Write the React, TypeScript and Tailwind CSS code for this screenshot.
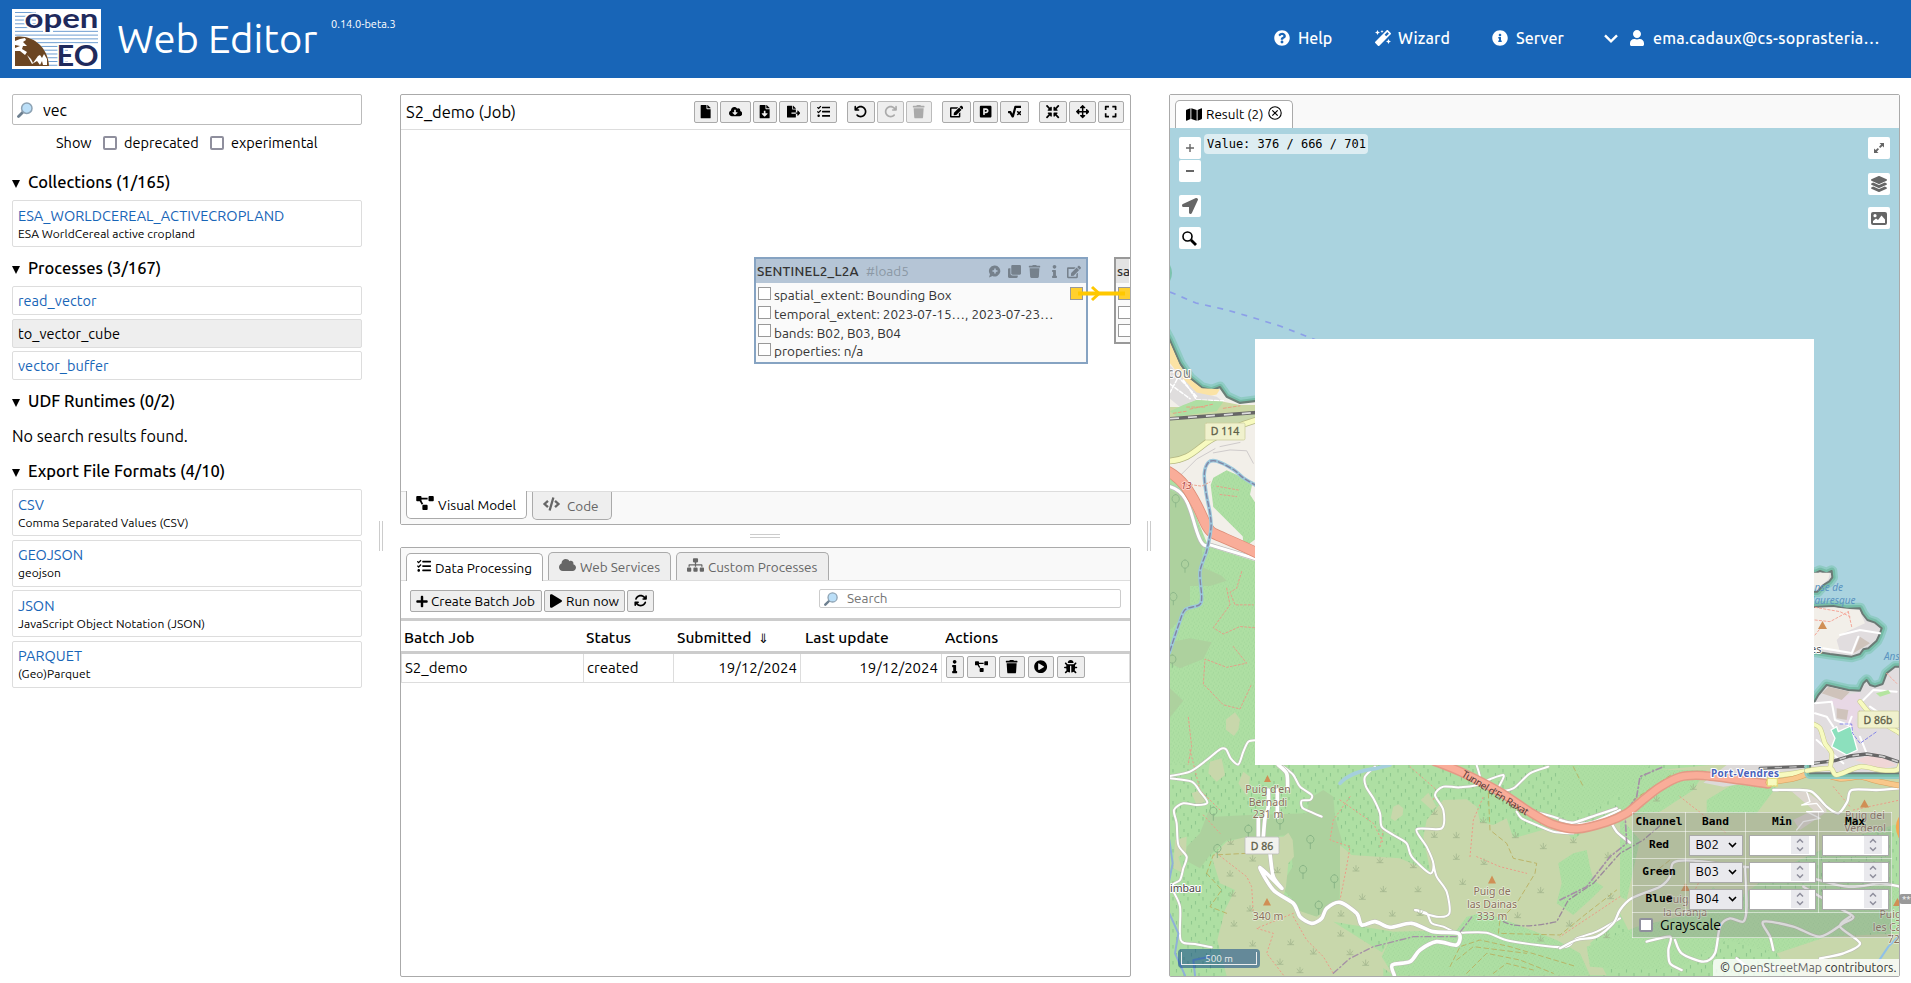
import React from "react";
import {
  FaFile, FaCloudDownloadAlt, FaFileDownload, FaFileExport, FaTasks, FaTrash, FaEdit, FaParking, FaSquareRootAlt,
  FaArrowsAlt, FaExpand, FaProjectDiagram, FaCode, FaCloud, FaSitemap, FaPlus, FaPlay, FaInfo, FaPlayCircle, FaBug,
  FaMap, FaQuestionCircle, FaMagic, FaInfoCircle, FaUser, FaLayerGroup, FaLocationArrow, FaClone,
  FaCompressArrowsAlt,
} from "react-icons/fa";
import { FaArrowRotateLeft, FaArrowRotateRight, FaArrowsRotate } from "react-icons/fa6";

type Icon = React.ComponentType<{ className?: string }>;

function Logo() {
  const lines = Array.from({ length: 15 }, (_, i) => 3.5 + i * 3.77);
  return (
    <svg className="h-[60px] w-[89px] shrink-0" viewBox="0 0 89 60">
      <rect width="89" height="60" fill="#fff" />
      {lines.map((y) => (
        <path key={y} d={`M3 ${y}H86`} stroke="#5f93cc" strokeWidth="0.9" />
      ))}
      <path d="M24 2H86V19.500H41V25H31V19.500H24ZM56 36H86V57H56ZM3 28C20 25 36 38 37 57H3Z" fill="#fff" />
      <path d="M3 28C20 25 36 38 37 57H3Z" fill="#6b4522" />
      <path d="M3 32L8 30L13 29L14 31L11 33L15 37L11 37L10 40L15 43L13 46L8 42L3 42V39L8 37L3 36ZM15 46L19 50L21 54L26 47L28 46L30 49L32 45L35 50V56H31L30 52L28 56L25 52L20 55Z" fill="#fff" />
      <g fontFamily="Lato, sans-serif" fontWeight="700" fill="#1f2a5c" stroke="#fff" strokeWidth="3" paintOrder="stroke">
        <text x="12.500" y="19" textLength="74" lengthAdjust="spacingAndGlyphs" fontSize="27.500">open</text>
        <text x="44.500" y="56.500" textLength="42" lengthAdjust="spacingAndGlyphs" fontSize="28">EO</text>
      </g>
    </svg>
  );
}

function Lens({ className }: { className?: string }) {
  return (
    <svg className={className} viewBox="0 0 16 16">
      <path d="M1.500 14.500L6 10" stroke="#6d7f8f" strokeWidth="2.800" strokeLinecap="round" />
      <circle cx="9.800" cy="6.200" r="5.200" fill="#bbdff8" stroke="#8da2b3" strokeWidth="1.500" />
    </svg>
  );
}

function Heading({ children, className }: { children: React.ReactNode; className: string }) {
  return (
    <div className={`flex h-6 items-center text-[16.500px] font-medium ${className}`}>
      <svg className="mt-1 h-2 w-2" viewBox="0 0 8 8"><path d="M0 0H8L4 8Z" /></svg>
      <span className="ml-2">{children}</span>
    </div>
  );
}

function Card({ title, sub, active }: { title: string; sub?: string; active?: boolean }) {
  return (
    <div className={`flex flex-col justify-center rounded-[2px] border border-[#ddd] px-[5px] ${sub ? "h-[47px] pt-px" : "h-[29px]"} ${active ? "bg-[#eee] text-black" : "text-[#1865b7]"}`}>
      <div className="h-[19px] text-[14.500px] leading-[20px] tracking-[0.05px]">{title}</div>
      {sub && <div className="h-[18px] text-[12px] leading-[18px] tracking-[0.06px] text-black">{sub}</div>}
    </div>
  );
}

function Btn({ icon: I, w, off }: { icon: Icon; w: string; off?: boolean }) {
  return (
    <button className={`flex h-[22px] items-center justify-center rounded-[2px] border bg-[#eee] ${w} ${off ? "border-[#bbb] text-[#aaa]" : "border-[#aaa] text-black"}`}>
      <I className="h-[13.300px] w-auto" />
    </button>
  );
}

function VHandle() {
  return <div className="mt-[427px] h-[30px] w-1 border-x border-[#ccc]" />;
}

function NodeRow({ children }: { children: React.ReactNode }) {
  return (
    <div className="flex h-[18.700px] items-center">
      <span className="h-[13px] w-[13px] shrink-0 border border-[#999] bg-white" />
      <span className="ml-[3px] mt-[4px] text-[13.500px] whitespace-nowrap">{children}</span>
    </div>
  );
}

function Canvas() {
  return (
    <div className="relative h-[361px] overflow-hidden">
      <div className="absolute left-[353px] top-[127px] h-[107px] w-[334px] border-2 border-[#86a3c2] bg-[#fafafa] text-[#333]">
        <div className="flex h-6 items-center bg-[#b5c5d6] pt-px text-[13.500px]">
          <span className="w-[110px] tracking-[0.2px] pl-px font-medium whitespace-nowrap">SENTINEL2_L2A</span>
          <span className="w-[118px] text-[#8b98a5]">#load5</span>
          <span className="flex items-center text-[#76818c] [&>*]:flex [&>*]:w-5 [&>*]:justify-center">
            <span>
              <svg className="h-[13px] w-[13px]" viewBox="0 0 13 13">
                <path d="M7 .5a5.500 5.500 0 1 1-2.500 10.500L1 12.500l1-3.300A5.500 5.500 0 0 1 7 .5Z" fill="currentColor" />
                <path d="M7 3.500v5M4.500 6h5" stroke="#b5c5d6" strokeWidth="1.500" />
              </svg>
            </span>
            <span><FaClone className="h-[13px] w-auto" /></span>
            <span><FaTrash className="h-[13px] w-auto" /></span>
            <span><FaInfo className="h-[13px] w-auto" /></span>
            <span><FaEdit className="h-[14px] w-auto" /></span>
          </span>
        </div>
        <div className="pl-[2px] pt-[1px]">
          <NodeRow>spatial_extent: Bounding Box</NodeRow>
          <NodeRow>temporal_extent: 2023-07-15…, 2023-07-23…</NodeRow>
          <NodeRow>bands: B02, B03, B04</NodeRow>
          <NodeRow>properties: n/a</NodeRow>
        </div>
      </div>
      <div className="absolute left-[713px] top-[127px] h-[87px] w-[60px] border-2 border-[#999] bg-[#fafafa] text-[#333]">
        <div className="h-6 w-[13px] overflow-hidden bg-[#e3e3e3] pl-px text-[13.500px] font-medium leading-[25px]">sa</div>
        <div className="pl-[2px] pt-[1px]">
          <NodeRow>{null}</NodeRow>
          <NodeRow>{null}</NodeRow>
          <NodeRow>{null}</NodeRow>
        </div>
      </div>
      <svg className="absolute left-[665px] top-[150px] h-[30px] w-[70px]" viewBox="1066 280 70 30">
        <rect x="1070.500" y="287.500" width="12" height="12" fill="#ffd02e" stroke="#999" />
        <rect x="1118.500" y="287.500" width="12" height="12" fill="#ffd02e" stroke="#999" />
        <path d="M1078 293.500H1125" stroke="#ffc800" strokeWidth="4" />
        <path d="M1092 287L1099 293.500L1092 300" stroke="#ffc800" strokeWidth="3" fill="none" />
      </svg>
    </div>
  );
}

function Tab({ icon: I, label, w, active, bottom, iconClass }: { icon: Icon; label: string; w: string; active?: boolean; bottom?: boolean; iconClass: string }) {
  return (
    <div className={`flex h-7 items-center border-[#aaa] text-[13.500px] whitespace-nowrap ${w} ${bottom ? "rounded-b-[5px] border-x border-b" : "rounded-t-[5px] border-x border-t"} ${active ? "bg-white text-black" : "bg-[#eee] text-[#666]"}`}>
      <I className={`-mt-1 h-[14px] shrink-0 ${iconClass}`} />
      <span className="mt-px">{label}</span>
    </div>
  );
}

const COLS = "grid grid-cols-[182px_90px_127px_141px_1fr]";

/* Turns "x,y x,y | x,y x,y" into smooth curves through the given points. */
function curve(spec: string) {
  return spec
    .split("|")
    .map((part) => {
      const p = part.trim().split(/\s+/).map((s) => s.split(",").map(Number));
      let d = `M${p[0][0]} ${p[0][1]}`;
      for (let i = 0; i < p.length - 1; i++) {
        const a = p[i - 1] ?? p[i], b = p[i], c = p[i + 1], e = p[i + 2] ?? c;
        d += `C${b[0] + (c[0] - a[0]) / 7} ${b[1] + (c[1] - a[1]) / 7} ${c[0] - (e[0] - b[0]) / 7} ${c[1] - (e[1] - b[1]) / 7} ${c[0]} ${c[1]}`;
      }
      return d;
    })
    .join("");
}

function Road({ pts, w, edge, fill }: { pts: string; w: number; edge: string; fill: string }) {
  const d = curve(pts);
  return (
    <>
      <path d={d} stroke={edge} strokeWidth={w + 3} />
      <path d={d} stroke={fill} strokeWidth={w} />
    </>
  );
}

const LANES =
  "30,108 90,95 140,60 180,28 198,28 212,55 235,73 250,35 265,5 290,0 | 30,115 95,125 120,155 142,188 110,195 70,190 42,210 50,250 55,315 80,350 70,385 60,420 35,440 60,500 62,600 105,612 155,622 | " +
  "370,80 400,105 420,140 455,165 450,180 425,182 427,203 450,215 485,230 | 645,80 615,110 618,140 640,175 660,220 665,260 700,285 740,310 755,350 810,400 820,370 800,320 770,268 845,265 850,210 825,165 850,140 900,142 960,130 950,75 | " +
  "820,370 830,410 860,455 868,520 830,530 765,510 800,520 815,550 850,560 890,580 | 905,578 980,578 1050,603 1210,622 1250,595 1310,575 1380,535 | 960,130 1030,105 1015,150 1060,145 1110,100 1165,80 | 1070,215 1085,235 1130,255 1180,275 1240,280 | 1120,215 1180,230 1240,250 1300,245 1380,210";
const HILL_ROAD =
  "355,75 380,100 383,145 | 325,150 325,200 315,235 310,290 | 352,150 352,232 | 295,235 295,300 | 330,340 340,410 365,445 300,382 340,450 400,490 420,530 455,550 485,535 500,505 540,487 590,520 605,555 645,545 690,562 755,550 820,575 895,580 890,615 830,605 780,630 750,665 697,675 703,706";
const EAST_LANES =
  "0,240 40,248 110,225 170,205 | 150,240 170,275 210,308 | 640,150 700,150 755,155 800,200 835,220 862,185 875,150 950,150 1020,145 | 0,625 50,600 110,590 160,550 180,510 215,475 300,440 330,410 340,368 400,362 550,380 700,400 860,440 960,430 1020,440 | " +
  "260,605 330,590 325,630 330,670 365,690 | 345,600 365,640 430,665 465,640 480,560 510,535 550,545 560,500 555,380 | 640,630 630,590 610,545 700,560 780,590 850,550 880,530 830,500 730,440 | 780,655 850,640 900,610 840,560 870,530 | 530,655 580,690 660,680";
const MOTORWAY =
  "1434,761 1461,772 1500,792 1530,812 1552,824 1577,829 1607,822 1627,813 1643,800 1660,787 1680,777 1703,775.5 1740,780 1768,784";
const STREAM = "290,374 250,355 220,335 170,315 145,318 133,345 138,390 150,440 153,475 140,530 120,580 125,640 118,660 75,672 55,710 28,775";
const WEST_LAND = "M0 -20L30 25L60 80L90 115L125 138L155 145L180 137L200 160L240 175L290 170V1100H0Z";
const HARBOUR =
  "M90 155L105 160L120 153L140 160L155 153L157 172L148 184L130 195L112 215H90ZM90 262L160 258L200 266L240 265L248 282L262 300L285 308L305 325L298 345L290 362L265 385L250 388L240 402L215 410L150 402L90 392ZM95 560L115 525L140 495L205 510L240 512L250 490L260 480L270 495L285 500L308 492L320 460L345 440H370V760H90Z";

function MapDrawing() {
  const tuft: [number, number][] = [
    [212, 305], [278, 355], [210, 400], [352, 390], [218, 460], [270, 505], [588, 385], [660, 360], [760, 375], [670, 447], [774, 447], [607, 470], [908, 425],
    [823, 215], [823, 284], [889, 285], [889, 350], [970, 240], [972, 365], [1066, 285], [1150, 318], [1240, 300], [1142, 450], [697, 520], [780, 518], [543, 520],
    [542, 580], [222, 550], [278, 610], [392, 606], [460, 634], [570, 636], [360, 665], [420, 690], [617, 668], [1228, 550], [1142, 595], [1344, 345], [1352, 468], [1340, 585], [1073, 525],
    [1600, 140], [1490, 175],
  ];
  const trees: [number, number][] = [[451, 298], [429, 388], [523, 416], [476, 495], [360, 240], [265, 267], [160, 213], [172, 325]];
  return (
    <svg className="absolute inset-0 h-full w-full" viewBox="1170 128 729 848" fill="none" strokeLinejoin="round" strokeLinecap="round" fontFamily="'Noto Sans', sans-serif">
      <defs>
        <pattern id="vine" width="15" height="16" patternUnits="userSpaceOnUse">
          <rect width="15" height="16" fill="#aedfa3" />
          <path d="M3 1v3.500M10.500 5v3.500M6.500 9v3.500M14 13v3" stroke="#8fc78e" strokeWidth="1.100" strokeLinecap="butt" />
        </pattern>
      </defs>
      <rect x="1170" y="128" width="729" height="848" fill="#aad3df" />

      {/* west coast */}
      <g transform="translate(1160 330) scale(0.33333 0.41646)">
        <path d={WEST_LAND} stroke="#8fcbc4" strokeWidth="11" vectorEffect="non-scaling-stroke" />
        <path d={WEST_LAND} stroke="#74bba6" strokeWidth="6" vectorEffect="non-scaling-stroke" />
        <path d={WEST_LAND} fill="#f2efe9" stroke="#6b8078" strokeWidth="2.200" vectorEffect="non-scaling-stroke" />
        <path d="M30 30L60 85L90 118L125 140L180 142L170 155L110 165L60 110L30 80Z" fill="#fbe3a5" />
        <path d="M30 85L110 150L170 160L190 172L120 172L60 185L30 165Z" fill="#dfdddd" />
        <path d="M40 100L110 160M30 130L90 165M60 105L30 150M70 120L110 168L190 170" stroke="#fff" strokeWidth="1.500" strokeDasharray="4 2" vectorEffect="non-scaling-stroke" />
        <path d="M30 185L60 185L110 168L190 172L240 180H290V205L30 215Z" fill="#cbd8a4" />
        <path d="M70 180L110 168L190 172L170 195L50 208L30 195Z" fill="#aedfa3" />
        <path d="M30 215L285 200V215L150 265L60 318L30 310Z" fill="#c8d7ab" />
        <path d="M80 185H140M40 200L80 195M90 190L160 178M190 188L240 182" stroke="#e9a083" strokeWidth="1" strokeDasharray="3 2" vectorEffect="non-scaling-stroke" />
        <path d="M30 345L75 390L110 450L145 520L285 555V1100H30Z" fill="url(#vine)" />
        <path d="M152 372L160 355L200 337L278 365L270 395L290 420V500L265 515L250 508L248 495L160 425Z" fill="url(#vine)" />
        <path d="M30 385L70 398L100 440L125 520L130 570L185 590L200 602L150 615L90 615V670L30 720Z" fill="#add19e" />
        <path d="M30 750L90 740L155 750L130 790L60 812L30 800ZM30 860L70 890L30 930Z" fill="#add19e" />
        <path d="M198 935L225 918L240 935L235 960L222 975L198 960Z" fill="#c8d7ab" />
        <path d="M30 213L290 198" stroke="#666" strokeWidth="3.500" vectorEffect="non-scaling-stroke" />
        <path d="M30 213L290 198" stroke="#ddd" strokeWidth="1.700" strokeDasharray="9 9" strokeLinecap="butt" vectorEffect="non-scaling-stroke" />
        <path d="M25 315C90 312 110 285 150 265S240 228 290 216" stroke="#b5b883" strokeWidth="6.500" vectorEffect="non-scaling-stroke" />
        <path d="M25 315C90 312 110 285 150 265S240 228 290 216" stroke="#f7fabf" strokeWidth="5" vectorEffect="non-scaling-stroke" />
        <path d="M25 375C80 385 90 430 105 470S130 525 150 516L290 550" stroke="#bbb" strokeWidth="4.500" vectorEffect="non-scaling-stroke" />
        <path d="M25 375C80 385 90 430 105 470S130 525 150 516L290 550" stroke="#fff" strokeWidth="3" vectorEffect="non-scaling-stroke" />
        <path d="M160 295L210 288L260 290L280 320M60 350L110 310L165 285M180 280L240 270" stroke="#cfcbcb" strokeWidth="1" vectorEffect="non-scaling-stroke" />
        <path d="M25 340C70 360 90 390 110 420S140 480 160 488S240 515 290 535" stroke="#dc8b75" strokeWidth="11" vectorEffect="non-scaling-stroke" />
        <path d="M25 340C70 360 90 390 110 420S140 480 160 488S240 515 290 535" stroke="#f9ad99" strokeWidth="9.500" vectorEffect="non-scaling-stroke" />
        <path d={curve(STREAM)} stroke="#9cc8dc" strokeWidth="3.500" vectorEffect="non-scaling-stroke" />
        <path d={curve(STREAM)} stroke="#8286a5" strokeWidth="1.400" strokeDasharray="5 3" vectorEffect="non-scaling-stroke" />
        <path d="M245 580L230 620L210 630L225 660L280 660M200 620L210 660L160 715L190 730L240 712L285 715M220 760L260 800L200 810L135 790L130 850L190 900L240 910L275 850M85 930L95 1000L80 1060M170 375L240 385M180 395L230 400M80 370L125 375L150 365" stroke="#e99a86" strokeWidth="0.900" strokeDasharray="2 2" vectorEffect="non-scaling-stroke" />
        <g stroke="#8fb98b" strokeWidth="1">
          {[[75, 562], [40, 640], [47, 405], [37, 790]].map(([x, y]) => (
            <path key={`${x}-${y}`} d={`M${x} ${y + 10}v10M${x} ${y - 10}a11 10 0 1 0 .1 0`} vectorEffect="non-scaling-stroke" />
          ))}
        </g>
      </g>

      {/* inland hills */}
      <rect x="1170" y="765" width="729" height="211" fill="url(#vine)" />
      <g transform="translate(1160 740) scale(0.33333)">
        <path d="M150 65L185 55L195 105L170 125L145 100ZM235 130L250 95L270 110L262 170ZM95 160L120 150L135 185L110 195ZM692 235L700 200L715 193L730 205L728 225L705 243ZM782 180L805 158L830 200L815 210Z" fill="#c8d7ab" />
        <path d="M145 215L165 230L270 225L440 220L450 175L490 150L520 170L525 230L545 300L538 490L470 530L420 515L400 480L360 440L398 380L390 285L200 300L150 345L120 385L75 360L80 320L120 280Z" fill="#add19e" />
        <path d="M155 350L200 305L260 290L370 290L385 278L398 300L402 350L385 370L378 440L370 470L410 510L470 530L540 485V315L575 345L720 355L800 390L812 400L790 290L800 240L850 180L920 178L950 200L960 245L1000 255L1040 235L1060 295L1200 255L1240 300L1300 250L1380 250V530L1290 610L1340 706H700L665 680V640L700 575L520 545L670 640V708H200L172 600L195 510L225 450L180 430Z" fill="#c8d7ab" />
        <path d="M700 575L890 570L920 530L960 520L1010 530L1190 600L1260 640L1290 706H700L665 650Z" fill="url(#vine)" />
        <path d="M1195 370L1240 340L1280 330L1290 380L1300 420L1330 440L1290 480L1240 525L1190 490L1205 430Z" fill="url(#vine)" />
        <path d="M45 300L80 290L78 340L55 350L70 400L40 385Z" fill="#c8d7ab" />
        <path d="M1380 180L1500 90L1650 75H2220V250L2050 300L1850 390L1700 500L1560 620L1420 600L1380 520Z" fill="#c8d7ab" />
        <path d="M1500 90L1380 150V230L1500 215L1600 150L1640 90ZM1640 180L1740 120L1850 140L1790 220H1640ZM1200 75H1470L1420 130L1320 200L1200 230Z" fill="url(#vine)" />
        <path d="M1280 620L1430 560L1600 520L1660 440L1700 500L1850 470L2220 430V560L2000 600L1850 640L1700 600L1560 680L1430 690L1290 680Z" fill="url(#vine)" />
        <path d="M1850 640L2000 590L2220 580V708H1900ZM1570 360L1800 350L1800 420L1600 450Z" fill="#c8d7ab" />
        <path d="M1380 230L1440 300L1400 480L1380 470Z" fill="url(#vine)" />

        <g stroke="#eb9c88" strokeWidth="3" strokeDasharray="4 8">
          <path d="M90 30L120 150L180 210M130 225L180 280M170 340L260 410L275 440L280 520M400 520L290 565L340 580L320 640L370 705M400 530L440 600L490 650L520 700M570 170L520 240L510 300L570 320L560 380L540 480M660 320L670 270M930 350L940 240L970 170M950 350L1020 380L1100 400M750 80L830 150L820 180M540 180L640 250L670 310M1380 470L1200 590" />
          <path d="M1560 170L1700 280M1620 420L1580 500M2080 210L2220 180M2020 140L2070 200" />
        </g>
        <g stroke="#b9ac5c" strokeWidth="2.500" strokeDasharray="14 10">
          <path d="M985 160L990 270L1040 310L1060 355L1130 370L1125 400L1070 490L1020 540L1015 580L1200 585L1280 520L1370 450M140 400L160 345L260 340M140 400L185 450L150 500L200 520M870 680L900 620L960 600L1050 620L1150 650L1250 680M920 700L980 640L1080 660L1180 700M890 660L940 620L1100 640M1000 700L1040 670L1120 690M1240 80L1270 140M1420 180L1540 100M1480 400L1530 360" />
        </g>
        <path d="M1030 545Q1080 570 1190 545L1225 480L1300 430L1380 340L1450 300L1520 240" stroke="#9b8a9c" strokeWidth="4" strokeDasharray="16 8 4 8" />
        <path d="M520 700L570 655L640 620L760 590L890 590L940 525" stroke="#a590a6" strokeWidth="4" strokeDasharray="18 8 4 8" />

        <Road pts={LANES} w={6} edge="#bdbdb5" fill="#fff" />
        <Road pts={HILL_ROAD} w={11} edge="#bdbdb5" fill="#fff" />
        <path d="M540 130Q570 95 650 85L690 75" stroke="#a5cfdc" strokeWidth="11" />
        <path d="M28 300L38 370L28 420M28 520L55 580L45 640L75 706M105 706L100 660L150 650" stroke="#8fb0d8" strokeWidth="6" />

        {/* tufts and trees */}
        <g stroke="#9fb28a" strokeWidth="2.200">
          {tuft.map(([x, y]) => (
            <path key={`${x}-${y}`} d={`M${x - 9} ${y + 8}h18M${x} ${y + 6}v-14M${x - 2} ${y + 6}l-6 -9M${x + 2} ${y + 6}l6 -9`} />
          ))}
          {trees.map(([x, y]) => (
            <path key={`${x}-${y}`} d={`M${x} ${y + 10}v18M${x} ${y - 12}a11 12 0 1 0 .1 0`} stroke="#8ab587" strokeWidth="3" />
          ))}
        </g>
      </g>

      {/* south-east roads */}
      <g transform="translate(1560 740) scale(0.33333)">
        <path d="M430 128L500 75L1020 60V85L760 92L640 118L490 140Z" fill="#dcd9d8" />
        <path d="M600 85L760 78L830 60L900 45L1020 70" stroke="#666" strokeWidth="9" />
        <path d="M600 85L760 78L830 60L900 45L1020 70" stroke="#bbb" strokeWidth="4" strokeDasharray="22 22" strokeLinecap="butt" />
        <Road pts="630,108 690,102 760,92 830,104 900,80 970,95 1020,85" w={14} edge="#c5c88a" fill="#f7fabf" />
        <path d="M690 150L740 155L795 195L800 215L750 250L720 270L700 240L760 210L725 180Z" fill="#dcd6cf" />
        <path d="M740 155L750 185L725 195L770 190L790 215L740 215L780 235L730 245L710 270" stroke="#fff" strokeWidth="4" />
        <Road
          pts="0,240 40,248 110,225 170,205 | 150,240 170,275 210,308" w={7} edge="#bdbdb5" fill="#fff"
        />
        <Road pts={EAST_LANES} w={7} edge="#bdbdb5" fill="#fff" />
        <path d="M0 480L80 440L150 350L200 310L195 220L230 170L240 110L310 80" stroke="#a590a6" strokeWidth="5" strokeDasharray="18 8 4 8" />
        <path d="M1015 590L985 620L955 665" stroke="#8fc0e8" strokeWidth="6" />
        <path d="M1020 235Q1005 260 1020 290" stroke="#f5a850" strokeWidth="10" />
      </g>
      <Road pts={MOTORWAY} w={6.5} edge="#e39a86" fill="#f9ad99" />
      <g transform="translate(1560 740) scale(0.33333)">
        <Road pts="625,128 700,116 765,98 840,116 900,110 950,123 1025,138" w={14} edge="#d9a05f" fill="#f8c78a" />
        <path d="M622 115H652V138H622Z" fill="#f7fabf" stroke="#e2d878" strokeWidth="4" strokeDasharray="6 4" />
      </g>

      {/* east harbour */}
      <g transform="translate(1780 520) scale(0.33333)">
        <path d={HARBOUR} stroke="#8fcbc4" strokeWidth="34" />
        <path d={HARBOUR} stroke="#76bda8" strokeWidth="20" />
        <path d={HARBOUR} fill="#e1dddf" stroke="#6b7a76" strokeWidth="6" />
        <path d="M90 158L150 158L145 178L105 212H90ZM90 265L160 262L238 270L255 310L190 340L170 360L180 395L90 383Z" fill="#f2efe9" />
        <path d="M150 540L240 515L245 580L225 600L240 640L200 610Z" fill="#e8d8e5" />
        <path d="M145 500L210 515L185 540L125 520ZM170 565L205 570L200 600L170 595ZM240 350L270 370L220 400Z" fill="#cfc3bb" />
        <path d="M153 630L170 620L175 635L212 618L232 690L200 705L155 680L165 655Z" fill="#8ce0bd" stroke="#fff" strokeWidth="4" />
        <path d="M105 550L155 545L165 600L205 615L215 590M105 580L140 590L160 620M180 345L240 330L300 340M215 400L235 350M240 650L260 700M250 540L280 510L350 515M110 660L190 730M300 600L350 640M270 560L330 600M130 385L210 398" stroke="#fff" strokeWidth="6" />
        <path d="M105 300L150 305L205 275M205 275L215 320M105 262L180 275L210 290M105 345L125 320M320 460L350 490" stroke="#f4a79a" strokeWidth="3" strokeDasharray="7 6" />
        <path d="M180 612H215L218 640L240 670L290 635" stroke="#8585e8" strokeWidth="3" strokeDasharray="9 6" />
        <path d="M288 520L325 510L332 520L300 530Z" fill="#b5e5a0" />
        <path d="M225 720L290 700L350 735L300 748Z" fill="#f0d6d6" />
        <path d="M100 730L165 722L210 708L260 702L310 710L360 727" stroke="#666" strokeWidth="10" />
        <path d="M100 730L165 722L210 708L260 702L310 710L360 727" stroke="#ccc" strokeWidth="5" strokeDasharray="20 20" strokeLinecap="butt" />
        <Road pts="95,610 120,625 135,670 155,700 150,745 | 240,545 280,590 360,640 | 80,752 150,745 170,765 240,740 300,750 350,750 360,735" w={12} edge="#c5c88a" fill="#f7fabf" />
      </g>

      {/* ferry line and western cape */}
      <path d="M1170 265Q1174 273 1170 281Z" fill="#7cc3ae" />
      <path d="M1170 292L1196 303L1227 310L1251 317L1280 326L1316 340" stroke="#8c9fe8" strokeWidth="1.700" strokeDasharray="6 6.500" strokeLinecap="butt" />

      {/* summits */}
      <path fill="#d08f55" d="M1264 782h7l-3.500-7ZM1263 905.500h8l-4-7.500ZM1488 883.500h8l-4-8ZM1818 629h9l-4.500-8ZM1860 807.500h9l-4.500-8ZM1681 891h9l-4.500-8ZM1893 906h9l-4.500-8Z" />

      {/* labels */}
      <g textAnchor="middle" fontSize="10.500" fill="#8a6f5c" stroke="#fff" strokeOpacity="0.550" strokeWidth="1.500" paintOrder="stroke">
        <text x="1268" y="793">Puig d'en</text><text x="1268" y="805.500">Bernadi</text><text x="1268" y="818">231 m</text>
        <text x="1268" y="920">340 m</text>
        <text x="1492" y="895">Puig de</text><text x="1492" y="907.500">las Dainas</text><text x="1492" y="920">333 m</text>
        <text x="1865" y="819">Puig del</text><text x="1865" y="831.500">Verderol</text>
        <text x="1685" y="903">Puig de</text><text x="1685" y="915.500">la Granja</text>
        <text x="1898" y="918">Puig de</text><text x="1898" y="930.500">les Cabres</text><text x="1903" y="943">729 m</text>
      </g>
      <g stroke="#fff" strokeWidth="2" paintOrder="stroke">
        <text x="1167" y="378" fontSize="13.500" fill="#888" textLength="24">cou</text>
        <text x="1170" y="892" fontSize="10.500" fill="#444">imbau</text>
        <text x="1711" y="777" fontSize="10" fontWeight="700" fill="#4a62bb" textLength="68">Port-Vendres</text>
        <text x="1810" y="653" fontSize="11" fill="#555">es</text>
      </g>
      <text transform="translate(1461 776) rotate(31.500)" fontSize="10" fill="#5a3a36" textLength="76">Tunnel d'En Raxat</text>
      <g fontStyle="italic" fontSize="10" fill="#5b93c0">
        <text x="1809" y="591">Anse de</text><text x="1806" y="603.500">Mauresque</text><text x="1884" y="660">Anse</text>
      </g>
      <text x="1181" y="489" fontSize="9.500" fontStyle="italic" fill="#b0413e" stroke="#fff" strokeOpacity="0.6" strokeWidth="1.500" paintOrder="stroke">13</text>
      <g strokeWidth="0.800">
        <rect x="1205" y="423" width="40" height="17" rx="1.500" fill="#f0f1cd" stroke="#cdcfa0" />
        <rect x="1245" y="837" width="34" height="17" rx="1.500" fill="#f2f2ee" stroke="#bbb" />
        <rect x="1858" y="711" width="41" height="17" rx="1.500" fill="#f0f1cd" stroke="#cdcfa0" />
      </g>
      <g fontSize="10.500" fill="#5e5e48" textAnchor="middle" stroke="#5e5e48" strokeWidth="0.300">
        <text x="1225" y="435">D 114</text><text x="1262" y="849.500">D 86</text><text x="1878" y="723.500">D 86b</text>
      </g>

      <rect x="1255" y="339" width="559" height="426" fill="#fff" />
    </svg>
  );
}

function Num() {
  return (
    <span className="mx-auto flex h-[21px] w-[67px] items-center justify-end border border-[#aaa] bg-white pr-[6px]">
      <span className="flex h-[18px] w-[18px] items-center justify-center bg-[#e9e9ed]">
        <svg className="h-[14px] w-[8px]" viewBox="0 0 8 14" fill="none" stroke="#8f8f9d" strokeWidth="1.500">
          <path d="M1 4.500L4 1.500L7 4.500M1 9.500L4 12.500L7 9.500" />
        </svg>
      </span>
    </span>
  );
}

function Bands() {
  const rows = [["Red", "B02"], ["Green", "B03"], ["Blue", "B04"]];
  const cell = "border border-white/50";
  return (
    <table className="absolute left-[462px] top-[684px] w-[259px] table-fixed border-collapse bg-[rgba(128,128,128,0.3)] font-['DejaVu_Sans_Mono'] text-[11.200px] leading-[18px]">
      <colgroup><col className="w-[53px]" /><col className="w-[60px]" /><col className="w-[73px]" /><col className="w-[73px]" /></colgroup>
      <thead>
        <tr className="h-[19px]">
          {["Channel", "Band", "Min", "Max"].map((h) => <th key={h} className={`p-0 ${cell}`}>{h}</th>)}
        </tr>
      </thead>
      <tbody>
        {rows.map(([n, b]) => (
          <tr key={n} className="h-[27px]">
            <th className={`p-0 ${cell}`}>{n}</th>
            <td className={`p-0 ${cell}`}>
              <span className="mx-auto flex h-[21px] w-[54px] items-center justify-between border border-[#aaa] bg-[#e9e9ed] pl-[6px] pr-[5px] font-['Ubuntu','Noto_Sans',sans-serif] text-[13.300px]">
                {b}
                <svg className="h-[6px] w-[9px]" viewBox="0 0 9 6" fill="none" stroke="#000" strokeWidth="1.600"><path d="M1 1L4.500 4.500L8 1" /></svg>
              </span>
            </td>
            <td className={`p-0 ${cell}`}><Num /></td>
            <td className={`p-0 ${cell}`}><Num /></td>
          </tr>
        ))}
        <tr className="h-[25px]">
          <td colSpan={4} className={`p-0 ${cell}`}>
            <span className="flex items-center pl-[6px] font-['Ubuntu','Noto_Sans',sans-serif] text-[14.400px]">
              <span className="mr-[7px] h-[14px] w-[14px] rounded-[2px] border-2 border-[#8f8f9d] bg-white" />Grayscale
            </span>
          </td>
        </tr>
      </tbody>
    </table>
  );
}

function MapButton({ className, children }: { className: string; children: React.ReactNode }) {
  return <button className={`absolute flex h-[22px] w-[22px] items-center justify-center rounded-[2px] bg-white text-[#666] ${className}`}>{children}</button>;
}

export default function App() {
  return (
    <div className="relative h-[983px] w-[1911px] overflow-hidden bg-white font-['Ubuntu','Noto_Sans',sans-serif] text-black">
      <header className="flex h-[78px] items-center bg-[#1865b7] pl-3 text-white">
        <Logo />
        <h1 className="ml-[16px] w-[214px] text-[40px] leading-none whitespace-nowrap">Web Editor</h1>
        <span className="-mt-[30px] text-[11px] whitespace-nowrap">0.14.0-beta.3</span>
        <nav className="absolute left-[1274px] top-0 flex h-[76px] items-center text-[16px] font-medium whitespace-nowrap">
          <span className="flex w-[101px] items-center gap-2"><FaQuestionCircle className="h-4 w-4" />Help</span>
          <span className="flex w-[117px] items-center gap-[7px] tracking-[0.15px]"><FaMagic className="h-4 w-4" />Wizard</span>
          <span className="flex w-[112px] items-center gap-2"><FaInfoCircle className="h-4 w-4" />Server</span>
          <svg className="h-[9px] w-[14px]" viewBox="0 0 14 9" fill="none" stroke="#fff" strokeWidth="2.400"><path d="M1 1.300L7 7.300L13 1.300" /></svg>
          <FaUser className="ml-3 h-4 w-[14px]" />
          <span className="ml-[9px] tracking-[0.28px]">ema.cadaux@cs-soprasteria…</span>
        </nav>
      </header>

      <div className="flex pl-3 pt-4">
        <aside className="w-[350px] whitespace-nowrap">
          <div className="flex h-[31px] items-center rounded-[2px] border border-[#bbb] pl-1">
            <Lens className="h-4 w-4" /><span className="ml-[10px] text-[16px]">vec</span>
          </div>
          <div className="mt-2 flex h-5 items-center pl-11 text-[14.500px]">
            <span className="w-[47px]">Show</span>
            <span className="mr-[7px] h-[14px] w-[14px] rounded-[2px] border-2 border-[#8f8f9d]" />
            <span className="w-[86px]">deprecated</span>
            <span className="mr-[7px] h-[14px] w-[14px] rounded-[2px] border-2 border-[#8f8f9d]" />
            <span>experimental</span>
          </div>
          <Heading className="mt-[17px] mb-[6px]">Collections (1/165)</Heading>
          <Card title="ESA_WORLDCEREAL_ACTIVECROPLAND" sub="ESA WorldCereal active cropland" />
          <Heading className="mt-[9px] mb-[6px]">Processes (3/167)</Heading>
          <div className="flex flex-col gap-[3.500px]">
            <Card title="read_vector" /><Card title="to_vector_cube" active /><Card title="vector_buffer" />
          </div>
          <Heading className="mt-[9px]">UDF Runtimes (0/2)</Heading>
          <p className="mt-[11px] h-6 text-[16.200px]">No search results found.</p>
          <Heading className="mt-[11px] mb-[6px]">Export File Formats (4/10)</Heading>
          <div className="flex flex-col gap-[3.670px]">
            <Card title="CSV" sub="Comma Separated Values (CSV)" />
            <Card title="GEOJSON" sub="geojson" />
            <Card title="JSON" sub="JavaScript Object Notation (JSON)" />
            <Card title="PARQUET" sub="(Geo)Parquet" />
          </div>
        </aside>
        <div className="flex w-[38px] justify-center pr-px"><VHandle /></div>

        <main className="w-[731px]">
          <section className="h-[431px] rounded-[2px] border border-[#aaa]">
            <div className="flex h-[35px] items-center border-b border-[#ddd] pl-[5px] pr-[6px]">
              <span className="flex-1 text-[16.500px] whitespace-nowrap">S2_demo (Job)</span>
              <div className="flex gap-[2px]">
                <Btn icon={FaFile} w="w-[24px]" /><Btn icon={FaCloudDownloadAlt} w="w-[31px]" /><Btn icon={FaFileDownload} w="w-[24px]" />
                <Btn icon={FaFileExport} w="w-[29px]" /><Btn icon={FaTasks} w="w-[27px]" />
              </div>
              <div className="ml-[10px] flex gap-[2px]">
                <Btn icon={FaArrowRotateLeft} w="w-[28px]" /><Btn icon={FaArrowRotateRight} w="w-[27px]" off /><Btn icon={FaTrash} w="w-[26px]" off />
              </div>
              <div className="ml-[10px] flex gap-[2px]">
                <Btn icon={FaEdit} w="w-[29px]" /><Btn icon={FaParking} w="w-[25px]" /><Btn icon={FaSquareRootAlt} w="w-[29px]" />
              </div>
              <div className="ml-[10px] flex gap-[2px]">
                <Btn icon={FaCompressArrowsAlt} w="w-[28px]" /><Btn icon={FaArrowsAlt} w="w-[27px]" /><Btn icon={FaExpand} w="w-[26px]" />
              </div>
            </div>
            <Canvas />
            <div className="flex h-[33px] gap-[5px] border-t border-[#ddd] bg-[#f9f9f9] pl-[5px]">
              <div className="-mt-px"><Tab icon={FaProjectDiagram} label="Visual Model" w="w-[121px] pl-[9px]" iconClass="w-[18px] mr-1" active bottom /></div>
              <div><Tab icon={FaCode} label="Code" w="w-[80px] pl-[10px]" iconClass="w-[17px] mr-[7px]" bottom /></div>
            </div>
          </section>
          <div className="flex h-[22px] items-center justify-center pr-[2px]"><span className="h-1 w-[30px] border-y border-[#ccc]" /></div>
          <section className="h-[430px] rounded-[2px] border border-[#aaa]">
            <div className="flex h-[33px] items-end gap-[5px] border-b border-[#ddd] bg-[#f9f9f9] pl-[5px]">
              <div className="-mb-px"><Tab icon={FaTasks} label="Data Processing" w="w-[137px] pl-[10px]" iconClass="w-[14px] mr-1" active /></div>
              <Tab icon={FaCloud} label="Web Services" w="w-[123px] pl-[10px]" iconClass="w-[17px] mr-1" />
              <Tab icon={FaSitemap} label="Custom Processes" w="w-[153px] pl-[10px]" iconClass="w-[17px] mr-1" />
            </div>
            <div className="flex h-[37px] items-start gap-[2px] pl-[9px] pr-[9px] pt-[9px] text-[13.500px] whitespace-nowrap">
              <button className="flex h-[22px] w-[132px] items-center rounded-[2px] border border-[#aaa] bg-[#eee] pl-[5px]"><FaPlus className="mr-[3px] h-[13px] w-[12px]" />Create Batch Job</button>
              <button className="flex h-[22px] w-[81px] items-center rounded-[2px] border border-[#aaa] bg-[#eee] pl-[5px]"><FaPlay className="mr-[4px] h-[14px] w-[12px]" />Run now</button>
              <Btn icon={FaArrowsRotate} w="w-[27px]" />
              <div className="-mt-px ml-auto flex h-[19px] w-[302px] items-center rounded-[2px] border border-[#ccc] pl-1 text-[#757575]"><Lens className="mr-[9px] h-[14px] w-[14px]" />Search</div>
            </div>
            <div className={`${COLS} h-[36px] items-center border-y-[3px] border-[#ccc] pt-[3px] text-[15.500px] font-medium whitespace-nowrap`}>
              <span className="pl-[3px]">Batch Job</span><span className="pl-[3px]">Status</span>
              <span className="pl-[4px]">Submitted <span className="ml-[3px] font-['DejaVu_Sans'] text-[13px]">⇓</span></span>
              <span className="pl-[5px]">Last update</span><span className="pl-[4px]">Actions</span>
            </div>
            <div className={`${COLS} h-[29px] border-b border-[#ddd] text-[15px] leading-[28px] [&>*]:border-l [&>*]:border-[#ddd]`}>
              <span className="pl-[3px]">S2_demo</span><span className="pl-[3px]">created</span>
              <span className="pr-[3px] text-right">19/12/2024</span><span className="pr-[3px] text-right">19/12/2024</span>
              <span className="flex items-center gap-[3px] border-r pl-1 pb-[2px]">
                <Btn icon={FaInfo} w="w-[18px]" /><Btn icon={FaProjectDiagram} w="w-[29px]" /><Btn icon={FaTrash} w="w-[26px]" />
                <Btn icon={FaPlayCircle} w="w-[26px]" /><Btn icon={FaBug} w="w-[28px]" />
              </span>
            </div>
          </section>
        </main>
        <div className="flex w-[38px] justify-center pr-[3px]"><VHandle /></div>

        <section className="h-[883px] w-[731px] rounded-[2px] border border-[#aaa]">
          <div className="flex h-[33px] items-end bg-[#f9f9f9] pl-[5px]">
            <div className="flex h-7 w-[118px] items-center rounded-t-[5px] border-x border-t border-[#aaa] bg-white pl-[10px] text-[13.500px] whitespace-nowrap">
              <FaMap className="mr-1 h-[15px] w-[16px]" />Result (2)
              <svg className="ml-[5px] -mt-[3px] h-[14px] w-[14px]" viewBox="0 0 14 14" fill="none" stroke="#000"><circle cx="7" cy="7" r="6.200" strokeWidth="1.100" /><path d="M4.300 4.300L9.700 9.700M9.700 4.300L4.300 9.700" strokeWidth="1.200" /></svg>
            </div>
          </div>
          <div className="relative h-[848px] w-[729px] overflow-hidden">
            <MapDrawing />
            <MapButton className="left-[9px] top-[9px]"><svg className="h-2 w-2" viewBox="0 0 8 8" stroke="#666" strokeWidth="1.400"><path d="M4 0V8M0 4H8" /></svg></MapButton>
            <MapButton className="left-[9px] top-[32px]"><span className="h-[1.500px] w-2 bg-[#666]" /></MapButton>
            <MapButton className="left-[9px] top-[67px]"><FaLocationArrow className="h-4 w-4" /></MapButton>
            <MapButton className="left-[9px] top-[99px]">
              <svg className="mr-[2px] h-[17px] w-[17px]" viewBox="0 0 17 17" fill="none" stroke="#000"><circle cx="6.500" cy="6.500" r="4.500" strokeWidth="1.600" /><path d="M10 10L15 15" strokeWidth="2.800" /></svg>
            </MapButton>
            <span className="absolute left-[34px] top-[6px] h-[20px] w-[164px] rounded-[4px] bg-white/60 pl-[3px] font-['DejaVu_Sans_Mono'] text-[12px] leading-[20px] whitespace-nowrap">Value: 376 / 666 / 701</span>
            <MapButton className="right-[9px] top-[9px]">
              <svg className="h-[10px] w-[10px]" viewBox="0 0 10 10" fill="#666"><path d="M5.500 0H10V4.500L8.400 2.900L6.200 5L5 3.800L7.100 1.600ZM4.500 10H0V5.500L1.600 7.100L3.800 5L5 6.200L2.900 8.400Z" /></svg>
            </MapButton>
            <MapButton className="right-[9px] top-[45px]"><FaLayerGroup className="h-4 w-4" /></MapButton>
            <MapButton className="right-[9px] top-[79px]">
              <svg className="h-[13px] w-4" viewBox="0 0 16 13"><rect width="16" height="13" rx="2" fill="#666" /><path d="M2 11V9L5 6.500L7 8L10.500 3.500L14 7.500V11Z" fill="#fff" /><circle cx="4" cy="3.700" r="1.600" fill="#fff" /></svg>
            </MapButton>
            <div className="absolute left-[8px] top-[821px] h-[19px] w-[82px] rounded-[4px] bg-[rgba(0,60,136,0.5)] p-[3px]">
              <div className="h-[13px] border border-t-0 border-[#eee] text-center text-[10px] leading-[13px] text-[#eee]">500 m</div>
            </div>
            <Bands />
            <div className="absolute right-0 bottom-0 h-[17px] w-[186px] rounded-tl-[4px] bg-white/80 pl-[7px] text-[12.300px] leading-[17px] whitespace-nowrap text-[#333]">© <span className="text-[#666]">OpenStreetMap</span> contributors.</div>
          </div>
        </section>
      </div>
      <div className="absolute left-[1899px] top-[894px] h-[10px] w-3 overflow-hidden rounded-l-[3px] bg-[#999] pl-[3px] text-[9px] leading-[12px] text-white">***</div>
    </div>
  );
}
